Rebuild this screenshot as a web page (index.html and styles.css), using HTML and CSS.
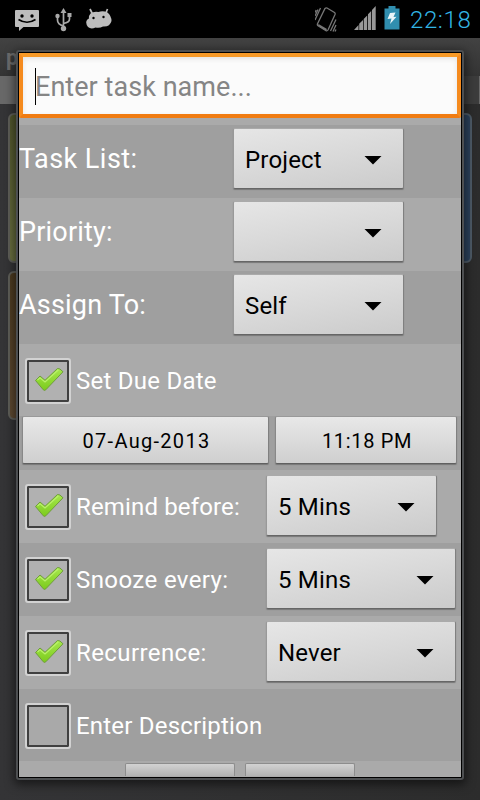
FILE: index.html
```
<!DOCTYPE html>
<html lang="en">
<head>
<meta charset="utf-8">
<title>New task</title>
<link rel="stylesheet" href="styles.css">
</head>
<body>
<svg class="defs" aria-hidden="true">
  <defs>
    <linearGradient id="green" x1="0" y1="0" x2="0" y2="1">
      <stop offset="0" stop-color="#a6e84e"/>
      <stop offset="1" stop-color="#7ccb1c"/>
    </linearGradient>
    <symbol id="tick" viewBox="0 0 30 25">
      <path d="M1.500 13.500 L6 9 L11 13.300 L23.500 1.500 Q25.500 .8 29 4.800 L11.800 22.800 Q10.500 24 9.300 22.800 Z" fill="url(#green)" stroke="#6f9c3c" stroke-width="1" stroke-linejoin="round"/>
      <path d="M3.500 13 L6 10.700 L11 15 L24.500 2.800" fill="none" stroke="#b9f06a" stroke-width="1.200"/>
    </symbol>
  </defs>
</svg>
<header class="status">
  <svg class="i-msg" width="26" height="26" viewBox="0 0 26 26"><path d="M1 1h22a1 1 0 0 1 1 1v15a1 1 0 0 1-1 1H8.500l-4.500 4v-4H1a1 1 0 0 1-1-1V2a1 1 0 0 1 1-1z" fill="#bdbdbd"/><circle cx="7" cy="7" r="1.700"/><circle cx="17" cy="7" r="1.700"/><path d="M3.500 10.500q8.500 5.500 17 0" fill="none" stroke="#000" stroke-width="1.600"/></svg>
  <svg class="i-usb" width="18" height="26" viewBox="0 0 18 26"><g fill="none" stroke="#a9a9a9" stroke-width="1.700"><path d="M8.500 4v18M8.500 18Q2.500 16.500 2.500 12V8M8.500 15.500Q14.500 14.500 14.500 11V8"/></g><g fill="#a9a9a9"><path d="M8.500 0l3 5h-6z"/><circle cx="2.500" cy="8" r="2.200"/><path d="M12.500 5h4v4h-4z"/><circle cx="8.500" cy="20.500" r="2.700"/></g></svg>
  <svg class="i-droid" width="28" height="24" viewBox="0 0 28 24"><path d="M4 1l2.500 5M21.500 1l-2 5" stroke="#bdbdbd" stroke-width="1.700"/><path d="M4.500 5.500Q8 3 12.500 4Q17 2.500 21.500 4.500Q25.500 8 25.500 13Q24 19 17 18.500Q13.500 20.500 9.500 19.500Q5 21.500 2 19Q-1 15 1 12Q2 10.500 3 10.500Q2.500 8 4.500 5.500z" fill="#bdbdbd"/><circle cx="7.500" cy="10" r="1.200"/><circle cx="17.500" cy="9" r="1.200"/></svg>
  <span class="spacer"></span>
  <svg class="i-vib" width="22" height="26" viewBox="0 0 22 26"><g fill="none" stroke="#777" stroke-width="1.300"><path d="M10 1.500q1-1 2-.5l7.500 4.500q1 .8.500 2l-7 15.500q-.8 1.200-2 .7l-8-5q-1-.8-.5-2z"/><path d="M0 13L5.500 1M0 9L3 2.500M0 5.500L1.200 3M15.500 24L21 12.500M18 24.500L21 18M20 24.500l1-2"/></g><path d="M3.500 17l8.500 5-1 1.800-8-5z" fill="#777"/></svg>
  <svg class="i-sig" width="22" height="24" viewBox="0 0 22 24"><path d="M0 24L4.500 19V24zM5.200 24v-6.200l3.800-3.800V24zM9.700 24V13l3.500-3.500V24zM14 24V8.300l3.200-3.300V24zM18 24V4L21.700 0v24z" fill="#999"/></svg>
  <svg class="i-bat" width="16" height="24" viewBox="0 0 16 24"><path d="M4.500 0h7v2.500H15.500V23.500H.5V2.500h4z" fill="#308eaf"/><path d="M6 7l5.500-.5-2 4.500 3-.3L6 18l1.500-5.500-4 .5z" fill="#eaf5f8"/></svg>
  <span class="clock">22:18</span>
</header>
<main class="board">
  <div class="titlebar">p</div>
  <div class="strip"></div>
  <div class="tiles">
    <div class="tile olive"></div><div class="tile navy"></div>
    <div class="tile brown"></div>
  </div>
</main>
<section class="dialog">
  <div class="sheet">
    <div class="name"><span class="caret"></span><span class="hint">Enter task name...</span></div>
    <div class="row dark"><span class="label l1">Task List:</span><div class="spin"><span class="v1">Project</span><i></i></div></div>
    <div class="row"><span class="label l2">Priority:</span><div class="spin"><i></i></div></div>
    <div class="row dark"><span class="label l3">Assign To:</span><div class="spin"><span class="v2">Self</span><i></i></div></div>
    <div class="row due"><span class="box on"><svg><use href="#tick"/></svg></span><span class="text t1">Set Due Date</span></div>
    <div class="dates"><div class="btn date"><span class="d1">07-Aug-2013</span></div><div class="btn time"><span class="d2">11:18 PM</span></div></div>
    <div class="row"><span class="box on"><svg><use href="#tick"/></svg></span><span class="text t2">Remind before:</span><div class="spin opt"><span class="v3">5 Mins</span><i></i></div></div>
    <div class="row dark"><span class="box on"><svg><use href="#tick"/></svg></span><span class="text t3">Snooze every:</span><div class="spin opt wide"><span class="v3">5 Mins</span><i></i></div></div>
    <div class="row"><span class="box on"><svg><use href="#tick"/></svg></span><span class="text t4">Recurrence:</span><div class="spin opt wide"><span class="v4">Never</span><i></i></div></div>
    <div class="row dark desc"><span class="box"></span><span class="text t5">Enter Description</span></div>
    <div class="actions"><div></div><div></div></div>
  </div>
</section>
</body>
</html>
```
FILE: styles.css
```
* { box-sizing: border-box; }
body { margin: 0; width: 480px; height: 800px; overflow: hidden; position: relative; background: #303030; font-family: Roboto, "Liberation Sans", sans-serif; }
.defs { position: absolute; width: 0; height: 0; }
.status { height: 38px; background: #000; display: flex; align-items: flex-start; padding: 0 9px 0 15px; }
.status svg { flex: none; }
.i-msg { margin-top: 9px; }
.i-usb { margin: 8px 0 0 14px; }
.i-droid { margin: 8px 0 0 13px; }
.spacer { flex: 1; }
.i-vib { margin: 7px 17px 0 0; }
.i-sig { margin: 6px 8px 0 0; }
.i-bat { margin: 6px 10px 0 0; }
.clock { width: 61px; font-size: 24px; line-height: 40px; color: #33b5e5; white-space: nowrap; font-weight: 300; letter-spacing: .6px; }
.titlebar { height: 38px; padding-left: 6px; background: linear-gradient(#424242, #343434); color: #6c6c6c; font-size: 22px; line-height: 40px; font-weight: 700; }
.strip { height: 28px; background: linear-gradient(90deg, #686868 0 30px, #3c3c3c 450px 479px, #686868 479px); }
.tiles { height: 696px; padding: 9px 8px; background: linear-gradient(90deg, #343436, #2c2c2c); display: grid; grid-template-columns: 220px 220px; grid-template-rows: 150px 149px; gap: 8px 24px; }
.tile { border: 2px solid #5e5e58; border-radius: 6px; }
.olive { background: linear-gradient(#50552c, #6a7040); }
.navy { background: #2b415c; border-color: #4d5a66; }
.brown { background: linear-gradient(#4c3a20, #5f4a32); }
.dialog { position: absolute; left: 16px; top: 50px; width: 448px; height: 730px; border: 2px solid #4d4f51; border-radius: 3px; box-shadow: 0 3px 10px 2px rgba(0,0,0,.5); background: #000; padding: 1px; }
.sheet { height: 724px; width: 442px; overflow: hidden; background: #aaa; display: flex; flex-direction: column; }
.sheet > div { flex: none; }
.name { height: 65px; margin-bottom: 7px; border: 4px solid; border-color: #f79a28 #f58b1f #f07c12; background: #fbfbfb; box-shadow: inset 0 2px 5px #e4e4e4; display: flex; align-items: center; padding: 1px 0 0 12px; font-size: 27px; color: #858585; border-radius: 2px; }
.caret { width: 1px; height: 37px; background: #000; }
.hint { margin: 2px 0 0 -1px; letter-spacing: .05px; }
.hint, .label, .text, .spin span, .btn span { white-space: nowrap; }
.row { height: 73px; display: flex; align-items: center; background: #aaa; color: #fff; }
.row.dark { background: #9f9f9f; }
.label { width: 214px; font-size: 27px; padding-bottom: 5px; }
.spin { width: 171px; height: 61px; margin-bottom: 7px; padding: 2px 21px 0 11px; border: 1px solid; border-color: #aaa #808080 #666 #999; border-radius: 2px; background: linear-gradient(170deg, #e6e6e6, #d9d9d9 50%, #cbcbcb); box-shadow: 0 1px 1px #777; display: flex; align-items: center; justify-content: space-between; color: #000; font-size: 24px; }
.spin span { padding-top: 1px; }
.spin i { width: 18px; height: 9px; margin: 2px 0 0 auto; background: #000; clip-path: polygon(0 0, 100% 0, 50% 100%); }
.row.due { height: 72px; }
.box { width: 46px; height: 46px; margin: 1px 5px 0 6px; border: 2px solid #d2d2d2; border-radius: 3px; background: #a9a9a9; box-shadow: inset 0 0 0 2px #404040; padding: 7px 0 0 7px; flex: none; }
.box.on { background: #b1b1b1; }
.box svg { display: block; width: 30px; height: 25px; }
.text { width: 190px; font-size: 24px; }
.dates { height: 54px; padding: 0 4px 0 3px; background: #9f9f9f; display: flex; gap: 6px; }
.btn { height: 48px; border: 1px solid; border-color: #999 #808080 #606060 #888; border-radius: 2px; background: linear-gradient(#e8e8e8, #cfcfcf); box-shadow: 0 1px 1px #777; display: flex; align-items: center; justify-content: center; color: #000; font-size: 20px; padding: 2px 0 0 2px; }
.date { width: 247px; }
.time { width: 182px; }
.opt { width: 171px; margin-bottom: 3px; }
.wide { width: 190px; }
.actions { height: 16px; display: flex; gap: 10px; padding: 2px 0 0 106px; }
.row.desc { height: 72px; }
.actions div { width: 110px; height: 13px; border: 1px solid #8d8d8d; border-bottom: 0; border-radius: 2px 2px 0 0; background: linear-gradient(#d2d2d2, #b2b2b2); }
.l1 { letter-spacing: .45px; }
.l2 { letter-spacing: .2px; }
.l3 { letter-spacing: .2px; }
.t1 { letter-spacing: .25px; padding-top: 2px; }
.t2 { letter-spacing: .15px; }
.t3 { letter-spacing: .4px; }
.t4 { letter-spacing: .4px; }
.t5 { letter-spacing: .2px; padding-top: 2px; }
.v1, .v2, .v3, .v4 { letter-spacing: .18px; }
.d1 { letter-spacing: 1.3px; }
.d2 { letter-spacing: .65px; }
```
